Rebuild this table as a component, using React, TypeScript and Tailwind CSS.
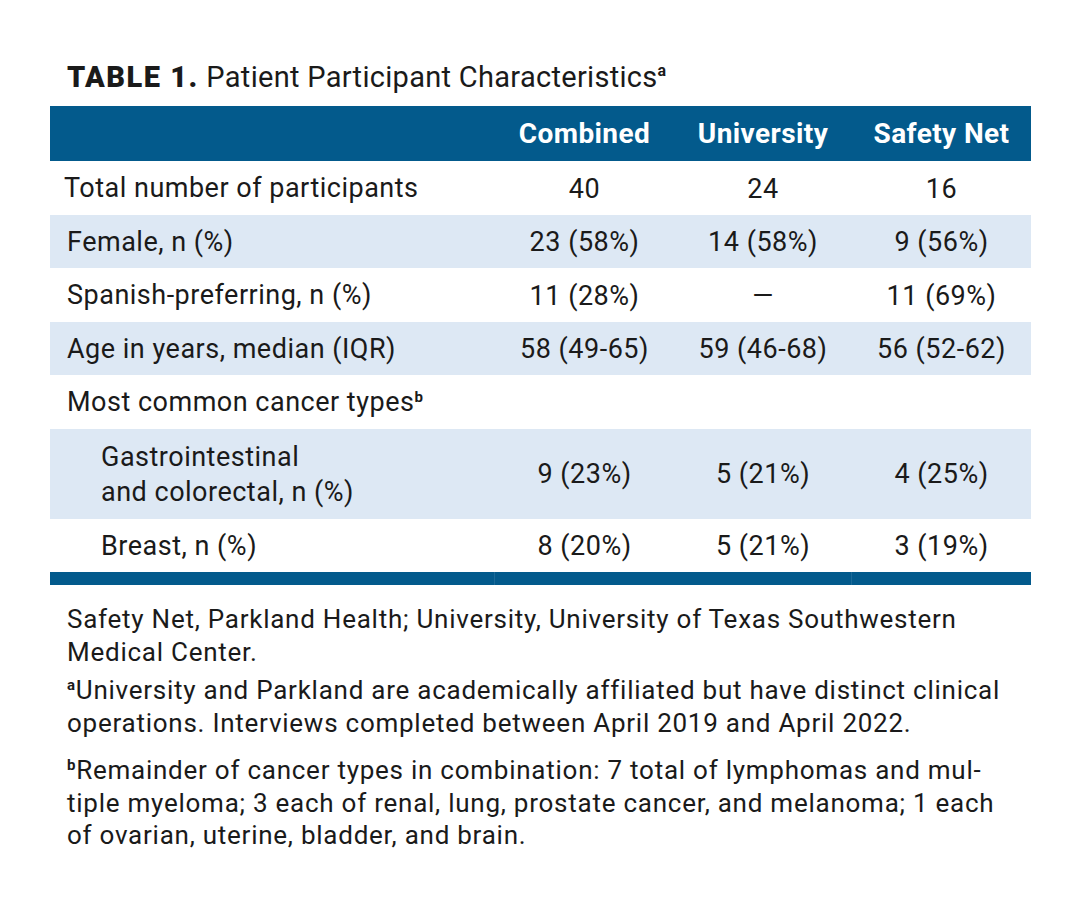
const rows: { label: string; vals: string[]; bg: boolean; indent?: boolean; tall?: boolean; sup?: string; first?: boolean }[] = [
  { label: 'Total number of participants', vals: ['40', '24', '16'], bg: false, first: true },
  { label: 'Female, n (%)', vals: ['23 (58%)', '14 (58%)', '9 (56%)'], bg: true },
  { label: 'Spanish-preferring, n (%)', vals: ['11 (28%)', '—', '11 (69%)'], bg: false },
  { label: 'Age in years, median (IQR)', vals: ['58 (49-65)', '59 (46-68)', '56 (52-62)'], bg: true },
  { label: 'Most common cancer types', vals: ['', '', ''], bg: false, sup: 'b' },
  { label: 'Gastrointestinal\nand colorectal, n (%)', vals: ['9 (23%)', '5 (21%)', '4 (25%)'], bg: true, indent: true, tall: true },
  { label: 'Breast, n (%)', vals: ['8 (20%)', '5 (21%)', '3 (19%)'], bg: false, indent: true },
];

const cols = 'grid grid-cols-[445px_179px_178px_179px]';

function Sup({ c, big }: { c: string; big?: boolean }) {
  return (
    <span className={`font-bold leading-none ${big ? 'text-[16px] align-[11px]' : 'text-[15px] align-[9px]'}`}>{c}</span>
  );
}

export default function App() {
  return (
    <div className="w-[1081px] h-[909px] bg-white text-[#1a1a1a]" style={{ fontFamily: 'Roboto, "Liberation Sans", sans-serif' }}>
      <div className="pt-[59px] pl-[50px] w-[1031px]">
        <h1 className="pl-[17px] text-[29px] leading-[36px] h-[47px] tracking-[0.3px] whitespace-nowrap">
          <span className="font-black tracking-[1.5px]">TABLE 1.</span>{' '}
          <span>Patient Participant Characteristics</span>
          <Sup c="a" big />
        </h1>

        <div className={`${cols} h-[55px] bg-[#035a8c] text-white font-bold text-[28px] tracking-[0.4px] items-center`}>
          <div />
          <div className="text-center">Combined</div>
          <div className="text-center">University</div>
          <div className="text-center">Safety Net</div>
        </div>

        {rows.map((r) => (
          <div
            key={r.label}
            className={`${cols} items-center text-[27px] tracking-[0.5px] ${r.tall ? 'h-[90px]' : 'h-[53.5px]'} ${r.bg ? 'bg-[#dde8f4]' : 'bg-white'}`}
          >
            <div className={`whitespace-pre-line leading-[35px] pt-[2px] ${r.indent ? 'pl-[51px]' : r.first ? 'pl-[14px]' : 'pl-[17px]'}`}>
              {r.label}
              {r.sup && <Sup c={r.sup} />}
            </div>
            {r.vals.map((v, i) => (
              <div key={i} className="text-center pt-[2px]">{v}</div>
            ))}
          </div>
        ))}

        <div className={`${cols} h-[13px]`}>
          <div className="bg-[#035a8c] border-r border-[#1c6a98]" />
          <div className="bg-[#035a8c]" />
          <div className="bg-[#035a8c] border-r border-[#1c6a98]" />
          <div className="bg-[#035a8c]" />
        </div>

        <div className="pl-[17px] pt-[18px] text-[26px] leading-[32.5px] tracking-[0.75px] whitespace-nowrap">
          <p className="mb-[6px]">
            Safety Net, Parkland Health; University, University of Texas Southwestern
            <br />
            Medical Center.
          </p>
          <p className="mb-[15px]">
            <Sup c="a" />University and Parkland are academically affiliated but have distinct clinical
            <br />
            operations. Interviews completed between April 2019 and April 2022.
          </p>
          <p>
            <Sup c="b" />Remainder of cancer types in combination: 7 total of lymphomas and mul-
            <br />
            tiple myeloma; 3 each of renal, lung, prostate cancer, and melanoma; 1 each
            <br />
            of ovarian, uterine, bladder, and brain.
          </p>
        </div>
      </div>
    </div>
  );
}
